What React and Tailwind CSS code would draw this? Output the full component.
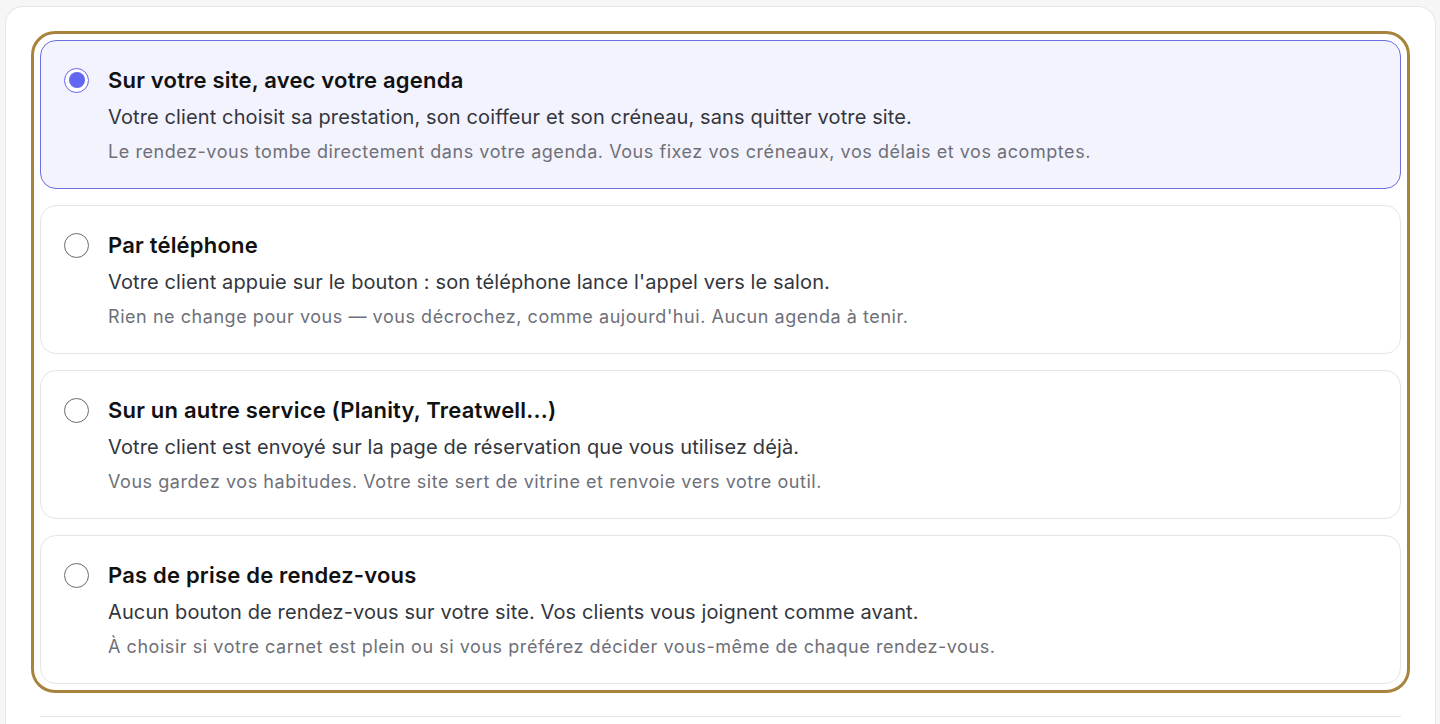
import React, { useState } from 'react';

const options = [
    {
        id: 'site',
        title: 'Sur votre site, avec votre agenda',
        desc: 'Votre client choisit sa prestation, son coiffeur et son créneau, sans quitter votre site.',
        note: 'Le rendez-vous tombe directement dans votre agenda. Vous fixez vos créneaux, vos délais et vos acomptes.',
    },
    {
        id: 'phone',
        title: 'Par téléphone',
        desc: "Votre client appuie sur le bouton : son téléphone lance l'appel vers le salon.",
        note: "Rien ne change pour vous — vous décrochez, comme aujourd'hui. Aucun agenda à tenir.",
    },
    {
        id: 'external',
        title: 'Sur un autre service (Planity, Treatwell...)',
        desc: 'Votre client est envoyé sur la page de réservation que vous utilisez déjà.',
        note: 'Vous gardez vos habitudes. Votre site sert de vitrine et renvoie vers votre outil.',
    },
    {
        id: 'none',
        title: 'Pas de prise de rendez-vous',
        desc: 'Aucun bouton de rendez-vous sur votre site. Vos clients vous joignent comme avant.',
        note: 'À choisir si votre carnet est plein ou si vous préférez décider vous-même de chaque rendez-vous.',
    },
];

const Radio = ({ checked }) => (
    <span
        className={
            checked
                ? 'mt-[1.5px] flex h-[25px] w-[25px] shrink-0 items-center justify-center rounded-full border-[1.5px] border-[#6366f1] bg-white'
                : 'mt-[1.5px] flex h-[25px] w-[25px] shrink-0 items-center justify-center rounded-full border-[1.5px] border-[#6b6b6b] bg-white'
        }
    >
        {checked && <span className="h-[16px] w-[16px] rounded-full bg-[#6366f1]" />}
    </span>
);

export default function App() {
    const [selected, setSelected] = useState('site');

    return (
        <div
            className="min-h-screen bg-[#f6f6f6] pl-[5px] pr-[4px] pt-[6px]"
            style={{ fontFamily: 'Inter, "Noto Sans", sans-serif' }}
        >
            <div className="rounded-t-[18px] border border-b-0 border-[#e6e6e6] bg-white px-[34px] pt-[33px] pb-[40px]">
                <div
                    role="radiogroup"
                    className="flex flex-col gap-[16px] rounded-[15px] outline-[3px] outline-offset-[6px] outline-[#a8833d]"
                    style={{ outlineStyle: 'solid' }}
                >
                    {options.map((o) => {
                        const checked = selected === o.id;
                        return (
                            <label
                                key={o.id}
                                onClick={() => setSelected(o.id)}
                                className={
                                    checked
                                        ? 'flex h-[149px] cursor-pointer gap-[19px] rounded-[16px] border border-[#6b6fe0] bg-[#f3f3fe] pl-[23px] pt-[25px]'
                                        : 'flex h-[149px] cursor-pointer gap-[19px] rounded-[16px] border border-[#e5e5e5] bg-white pl-[23px] pt-[25px]'
                                }
                            >
                                <Radio checked={checked} />
                                <div className="flex flex-col">
                                    <span className="text-[22px] leading-[28px] font-semibold tracking-[0.2px] text-[#111111]">
                                        {o.title}
                                    </span>
                                    <span className="mt-[9px] text-[20px] leading-[28px] tracking-[0.12px] text-[#33363d]">
                                        {o.desc}
                                    </span>
                                    <span className="mt-[8px] text-[18px] leading-[26px] tracking-[0.55px] text-[#6e7079]">
                                        {o.note}
                                    </span>
                                </div>
                            </label>
                        );
                    })}
                </div>
                <div className="mt-[32px] border-t border-[#e6e6e6]" />
            </div>
        </div>
    );
}
